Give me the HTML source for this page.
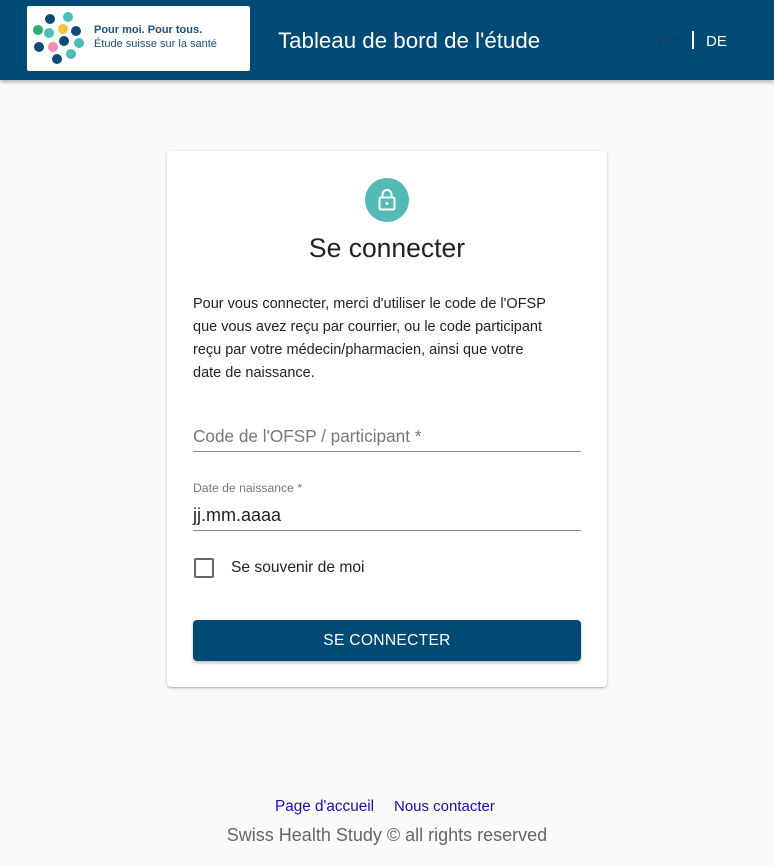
<!DOCTYPE html>
<html><head><meta charset="utf-8"><style>
*{margin:0;padding:0;box-sizing:border-box}
body{width:774px;height:866px;background:#fafafa;font-family:"Liberation Sans",Arial,sans-serif;position:relative;overflow:hidden}
.hdr{position:absolute;left:0;top:0;width:774px;height:80px;background:#004b76;box-shadow:0 2px 4px rgba(0,0,0,.3)}
.logo{position:absolute;left:27px;top:6px;width:223px;height:65px;background:#fff;border-radius:2px}
.t{position:absolute;white-space:nowrap}
.card{position:absolute;left:167px;top:151px;width:440px;height:536px;background:#fff;border-radius:4px;box-shadow:0 1px 3px rgba(0,0,0,.2),0 1px 1px rgba(0,0,0,.14)}
</style></head><body>
<div class="hdr">
 <div class="logo">
  <svg width="223" height="65" style="position:absolute;left:0;top:0">
   <g transform="translate(-27,-6)">
   <circle cx="50" cy="19" r="5" fill="#0f4c75"/>
   <circle cx="68" cy="17" r="5" fill="#4dbdb8"/>
   <circle cx="38" cy="30" r="5" fill="#2fae6a"/>
   <circle cx="49" cy="33" r="5" fill="#4dbdb8"/>
   <circle cx="63" cy="29" r="5" fill="#f5c242"/>
   <circle cx="76" cy="31" r="5" fill="#0f4c75"/>
   <circle cx="39" cy="47" r="5" fill="#0f4c75"/>
   <circle cx="53" cy="47" r="5" fill="#ee8fb9"/>
   <circle cx="64" cy="41" r="5" fill="#0f4c75"/>
   <circle cx="79" cy="43" r="5" fill="#4dbdb8"/>
   <circle cx="71" cy="54" r="5" fill="#4dbdb8"/>
   <circle cx="57" cy="59" r="5" fill="#0f4c75"/>
   </g>
  </svg>
  <div class="t" style="left:67px;top:18px;font-size:11px;font-weight:bold;color:#1d4f78">Pour moi. Pour tous.</div>
  <div class="t" style="left:67px;top:32px;font-size:11px;color:#1d4f78">Étude suisse sur la santé</div>
 </div>
 <div class="t" style="left:278px;top:28px;font-size:22.3px;color:#fff">Tableau de bord de l'étude</div>
 <div class="t" style="left:658px;top:33px;font-size:15px;color:#0f3f60">FR</div>
 <div style="position:absolute;left:692px;top:31px;width:2px;height:18px;background:#fff"></div>
 <div class="t" style="left:706px;top:33px;font-size:15px;color:#fff">DE</div>
</div>
<div class="card">
 <div style="position:absolute;left:198px;top:27px;width:44px;height:44px;border-radius:50%;background:#54bab5"></div>
 <svg width="44" height="44" style="position:absolute;left:198px;top:27px" viewBox="0 0 44 44">
  <rect x="14.5" y="19.5" width="15" height="12" rx="1.5" fill="none" stroke="#fff" stroke-width="2"/>
  <path d="M17.5 19.5v-3a4.5 4.5 0 0 1 9 0v3" fill="none" stroke="#fff" stroke-width="2"/>
  <circle cx="22" cy="25.5" r="1.5" fill="#fff"/>
 </svg>
 <div class="t" style="left:0;width:440px;text-align:center;top:82px;font-size:26.5px;color:#222">Se connecter</div>
 <div class="t" style="left:26px;top:142px;font-size:14.5px;line-height:23px;color:#222">Pour vous connecter, merci d'utiliser le code de l'OFSP<br>que vous avez reçu par courrier, ou le code participant<br>reçu par votre médecin/pharmacien, ainsi que votre<br>date de naissance.</div>
 <div class="t" style="left:26px;top:275px;font-size:17.2px;color:#777">Code de l'OFSP / participant *</div>
 <div style="position:absolute;left:26px;top:300px;width:388px;height:1px;background:#8c8c8c"></div>
 <div class="t" style="left:26px;top:330px;font-size:12.2px;color:#777">Date de naissance *</div>
 <div class="t" style="left:26px;top:354px;font-size:18px;color:#222">jj.mm.aaaa</div>
 <div style="position:absolute;left:26px;top:379px;width:388px;height:1px;background:#8c8c8c"></div>
 <div style="position:absolute;left:27px;top:407px;width:20px;height:20px;border:2px solid #666;border-radius:2px"></div>
 <div class="t" style="left:64px;top:408px;font-size:15.6px;color:#222">Se souvenir de moi</div>
 <div style="position:absolute;left:26px;top:469px;width:388px;height:41px;background:#004b76;border-radius:4px;box-shadow:0 2px 3px rgba(0,0,0,.25);color:#fff;font-size:15.6px;text-align:center;line-height:42px;letter-spacing:.3px">SE CONNECTER</div>
</div>
<div class="t" style="left:275px;top:798px;font-size:15.3px;color:#1a0dab">Page d'accueil</div>
<div class="t" style="left:394px;top:798px;font-size:15px;color:#1a0dab">Nous contacter</div>
<div class="t" style="left:0;width:774px;text-align:center;top:825px;font-size:18px;color:#666">Swiss Health Study © all rights reserved</div>
</body></html>
